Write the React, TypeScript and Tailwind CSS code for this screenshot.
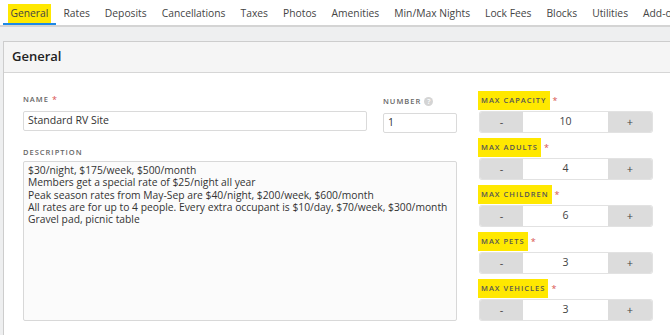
import React from "react";

const tabs = [
  "General",
  "Rates",
  "Deposits",
  "Cancellations",
  "Taxes",
  "Photos",
  "Amenities",
  "Min/Max Nights",
  "Lock Fees",
  "Blocks",
  "Utilities",
  "Add-ons",
];

const steppers = [
  { label: "MAX CAPACITY", value: "10" },
  { label: "MAX ADULTS", value: "4" },
  { label: "MAX CHILDREN", value: "6" },
  { label: "MAX PETS", value: "3" },
  { label: "MAX VEHICLES", value: "3" },
];

const descLines = [
  "$30/night, $175/week, $500/month",
  "Members get a special rate of $25/night all year",
  "Peak season rates from May-Sep are $40/night, $200/week, $600/month",
  "All rates are for up to 4 people. Every extra occupant is $10/day, $70/week, $300/month",
  "Gravel pad, picnic table",
];

function Label({ children, required, h = "h-[19px]" }: { children: React.ReactNode; required?: boolean; h?: string }) {
  return (
    <div className={`flex items-center ${h} text-[7.5px] font-semibold tracking-[1px] text-[#666]`}>
      <span>{children}</span>
      {required && <span className="ml-[3px] text-[#d9534f] text-[9px] font-normal">*</span>}
    </div>
  );
}

function Stepper({ label, value }: { label: string; value: string }) {
  return (
    <div className="flex flex-col">
      <div className="flex items-center h-[19px]">
        <span className="bg-[#ffe800] h-[19px] flex items-center px-[3px] text-[7.5px] font-semibold tracking-[1px] text-[#555]">
          {label}
        </span>
        <span className="ml-[3px] text-[#d9534f] text-[9px]">*</span>
      </div>
      <div className="mt-[2px] ml-[2px] flex h-[20px] w-[172px] rounded-[2px] overflow-hidden shadow-[0_0_0_1px_#e2e2e2]">
        <div className="w-[43px] bg-[#dcdcdc] flex items-center justify-center text-[11px] text-[#444]">-</div>
        <div className="flex-1 bg-white flex items-center justify-center text-[10.5px] text-[#444]">{value}</div>
        <div className="w-[44px] bg-[#dcdcdc] flex items-center justify-center text-[11px] text-[#444]">+</div>
      </div>
    </div>
  );
}

export default function App() {
  return (
    <div
      className="w-[670px] h-[335px] overflow-hidden bg-[#eeeff0] text-[#333]"
      style={{ fontFamily: '"Open Sans", "Noto Sans", sans-serif' }}
    >
      {/* Tabs */}
      <div className="bg-white h-[27px] border-b-2 border-[#d4d4d4] flex pl-[3px] whitespace-nowrap overflow-hidden">
        {tabs.map((t, i) => (
          <div
            key={t}
            className={`h-[25px] px-[4.5px] pt-[4px] shrink-0 ${i === 0 ? "border-b-2 border-[#1e88e5]" : ""}`}
          >
            <span
              className={`h-[19px] flex items-center px-[3px] text-[10.3px] text-[#444] ${
                i === 0 ? "bg-[#ffe800]" : ""
              }`}
            >
              {t}
            </span>
          </div>
        ))}
      </div>

      {/* Panel */}
      <div className="mt-[14px] ml-[3px] bg-white border-l border-t border-[#cdcdcd] h-[300px]">
        <div className="h-[31px] bg-[#f5f5f5] border-b border-[#d6d6d6] flex items-center pl-[8px] text-[13px] font-semibold text-[#222]">
          General
        </div>
        <div className="flex pl-[19px] pt-[18px]">
          {/* Left column */}
          <div className="w-[434px] flex flex-col">
            <div className="flex gap-[16px] -mt-[1px]">
              <div className="flex flex-col w-[344px]">
                <Label required>NAME</Label>
                <div className="mt-[2px] h-[20px] border border-[#dadada] rounded-[2px] bg-white flex items-center px-[4px] text-[10.5px] text-[#333]">
                  Standard RV Site
                </div>
              </div>
              <div className="flex flex-col w-[74px] mt-[2px]">
                <div className="flex items-center h-[19px] text-[7.5px] font-semibold tracking-[1px] text-[#666]">
                  <span>NUMBER</span>
                  <span className="ml-[3px] w-[9px] h-[9px] rounded-full bg-[#d4d4d4] text-white text-[7px] leading-none flex items-center justify-center tracking-normal">
                    ?
                  </span>
                </div>
                <div className="mt-[2px] h-[20px] border border-[#dadada] rounded-[2px] bg-white flex items-center px-[4px] text-[10.5px] text-[#333]">
                  1
                </div>
              </div>
            </div>
            <div className="mt-[11px]">
              <Label h="h-[17px]">DESCRIPTION</Label>
            </div>
            <div className="h-[160px] border border-[#d8d8d8] rounded-[2px] bg-[#fbfbfb] px-[4px] pt-[2px] text-[10.3px] leading-[12.3px] text-[#333]">
              {descLines.map((l) => (
                <div key={l} className="whitespace-nowrap">
                  {l}
                </div>
              ))}
            </div>
          </div>

          {/* Right column */}
          <div className="ml-[21px] flex flex-col gap-[6px]">
            {steppers.map((s) => (
              <Stepper key={s.label} label={s.label} value={s.value} />
            ))}
          </div>
        </div>
      </div>
    </div>
  );
}
